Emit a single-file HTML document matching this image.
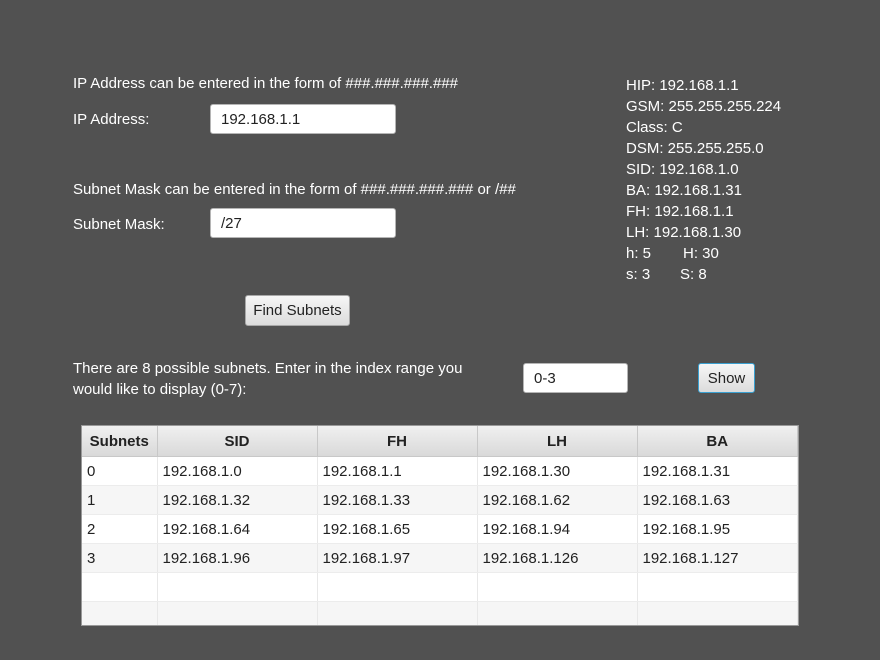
<!DOCTYPE html>
<html><head><meta charset="utf-8"><style>
body{margin:0;width:880px;height:660px;background:#515151;font-family:"Liberation Sans",sans-serif;font-size:15px;color:#fff;position:relative;overflow:hidden}
.a{position:absolute;white-space:nowrap}
.in{position:absolute;background:#fff;border:1px solid #b5b5b5;border-radius:3px;box-sizing:border-box;color:#222;padding-left:10px;line-height:29px}
.btn{position:absolute;box-sizing:border-box;border:1px solid #a8a8a8;border-radius:3px;background:linear-gradient(#f6f6f6,#dcdcdc);color:#222;text-align:center;line-height:29px}
.wrap{position:absolute;left:81px;top:425px;width:718px;height:201px;overflow:hidden;border:1px solid #999;box-sizing:border-box;background:#fff}
table{width:716px;border-collapse:collapse;background:#fff;color:#222;table-layout:fixed}
th{height:30px;background:linear-gradient(#f0f0f0,#d9d9d9);border:1px solid #c8c8c8;border-top:0;font-weight:bold;padding:0}
td{height:28px;border-right:1px solid #e8e8e8;border-bottom:1px solid #ececec;padding:0 0 0 5px}
tr:nth-child(odd) td{background:#f6f6f6}
</style></head><body>
<div class="a" style="left:73px;top:75px">IP Address can be entered in the form of ###.###.###.###</div>
<div class="a" style="left:73px;top:111px">IP Address:</div>
<div class="in" style="left:210px;top:104px;width:186px;height:30px">192.168.1.1</div>
<div class="a" style="left:73px;top:181px">Subnet Mask can be entered in the form of ###.###.###.### or /##</div>
<div class="a" style="left:73px;top:216px">Subnet Mask:</div>
<div class="in" style="left:210px;top:208px;width:186px;height:30px">/27</div>
<div class="btn" style="left:245px;top:295px;width:105px;height:31px">Find Subnets</div>
<div class="a" style="left:73px;top:358px;line-height:21px">There are 8 possible subnets. Enter in the index range you<br>would like to display (0-7):</div>
<div class="in" style="left:523px;top:363px;width:105px;height:30px">0-3</div>
<div class="btn" style="left:698px;top:363px;width:57px;height:30px;border:1px solid #3aa0d0;line-height:29px">Show</div>
<div class="a" style="left:626px;top:75px;line-height:21px">HIP: 192.168.1.1<br>GSM: 255.255.255.224<br>Class: C<br>DSM: 255.255.255.0<br>SID: 192.168.1.0<br>BA: 192.168.1.31<br>FH: 192.168.1.1<br>LH: 192.168.1.30<br>h: 5<br>s: 3</div>
<div class="a" style="left:683px;top:243px;line-height:21px">H: 30</div>
<div class="a" style="left:680px;top:264px;line-height:21px">S: 8</div>
<div class="wrap"><table>
<colgroup><col style="width:75px"><col style="width:160px"><col style="width:160px"><col style="width:160px"><col></colgroup>
<tr><th style="border-left:0">Subnets</th><th>SID</th><th>FH</th><th>LH</th><th>BA</th></tr>
<tr><td>0</td><td>192.168.1.0</td><td>192.168.1.1</td><td>192.168.1.30</td><td>192.168.1.31</td></tr>
<tr><td>1</td><td>192.168.1.32</td><td>192.168.1.33</td><td>192.168.1.62</td><td>192.168.1.63</td></tr>
<tr><td>2</td><td>192.168.1.64</td><td>192.168.1.65</td><td>192.168.1.94</td><td>192.168.1.95</td></tr>
<tr><td>3</td><td>192.168.1.96</td><td>192.168.1.97</td><td>192.168.1.126</td><td>192.168.1.127</td></tr>
<tr><td></td><td></td><td></td><td></td><td></td></tr>
<tr><td></td><td></td><td></td><td></td><td></td></tr>
</table></div>
</body></html>
